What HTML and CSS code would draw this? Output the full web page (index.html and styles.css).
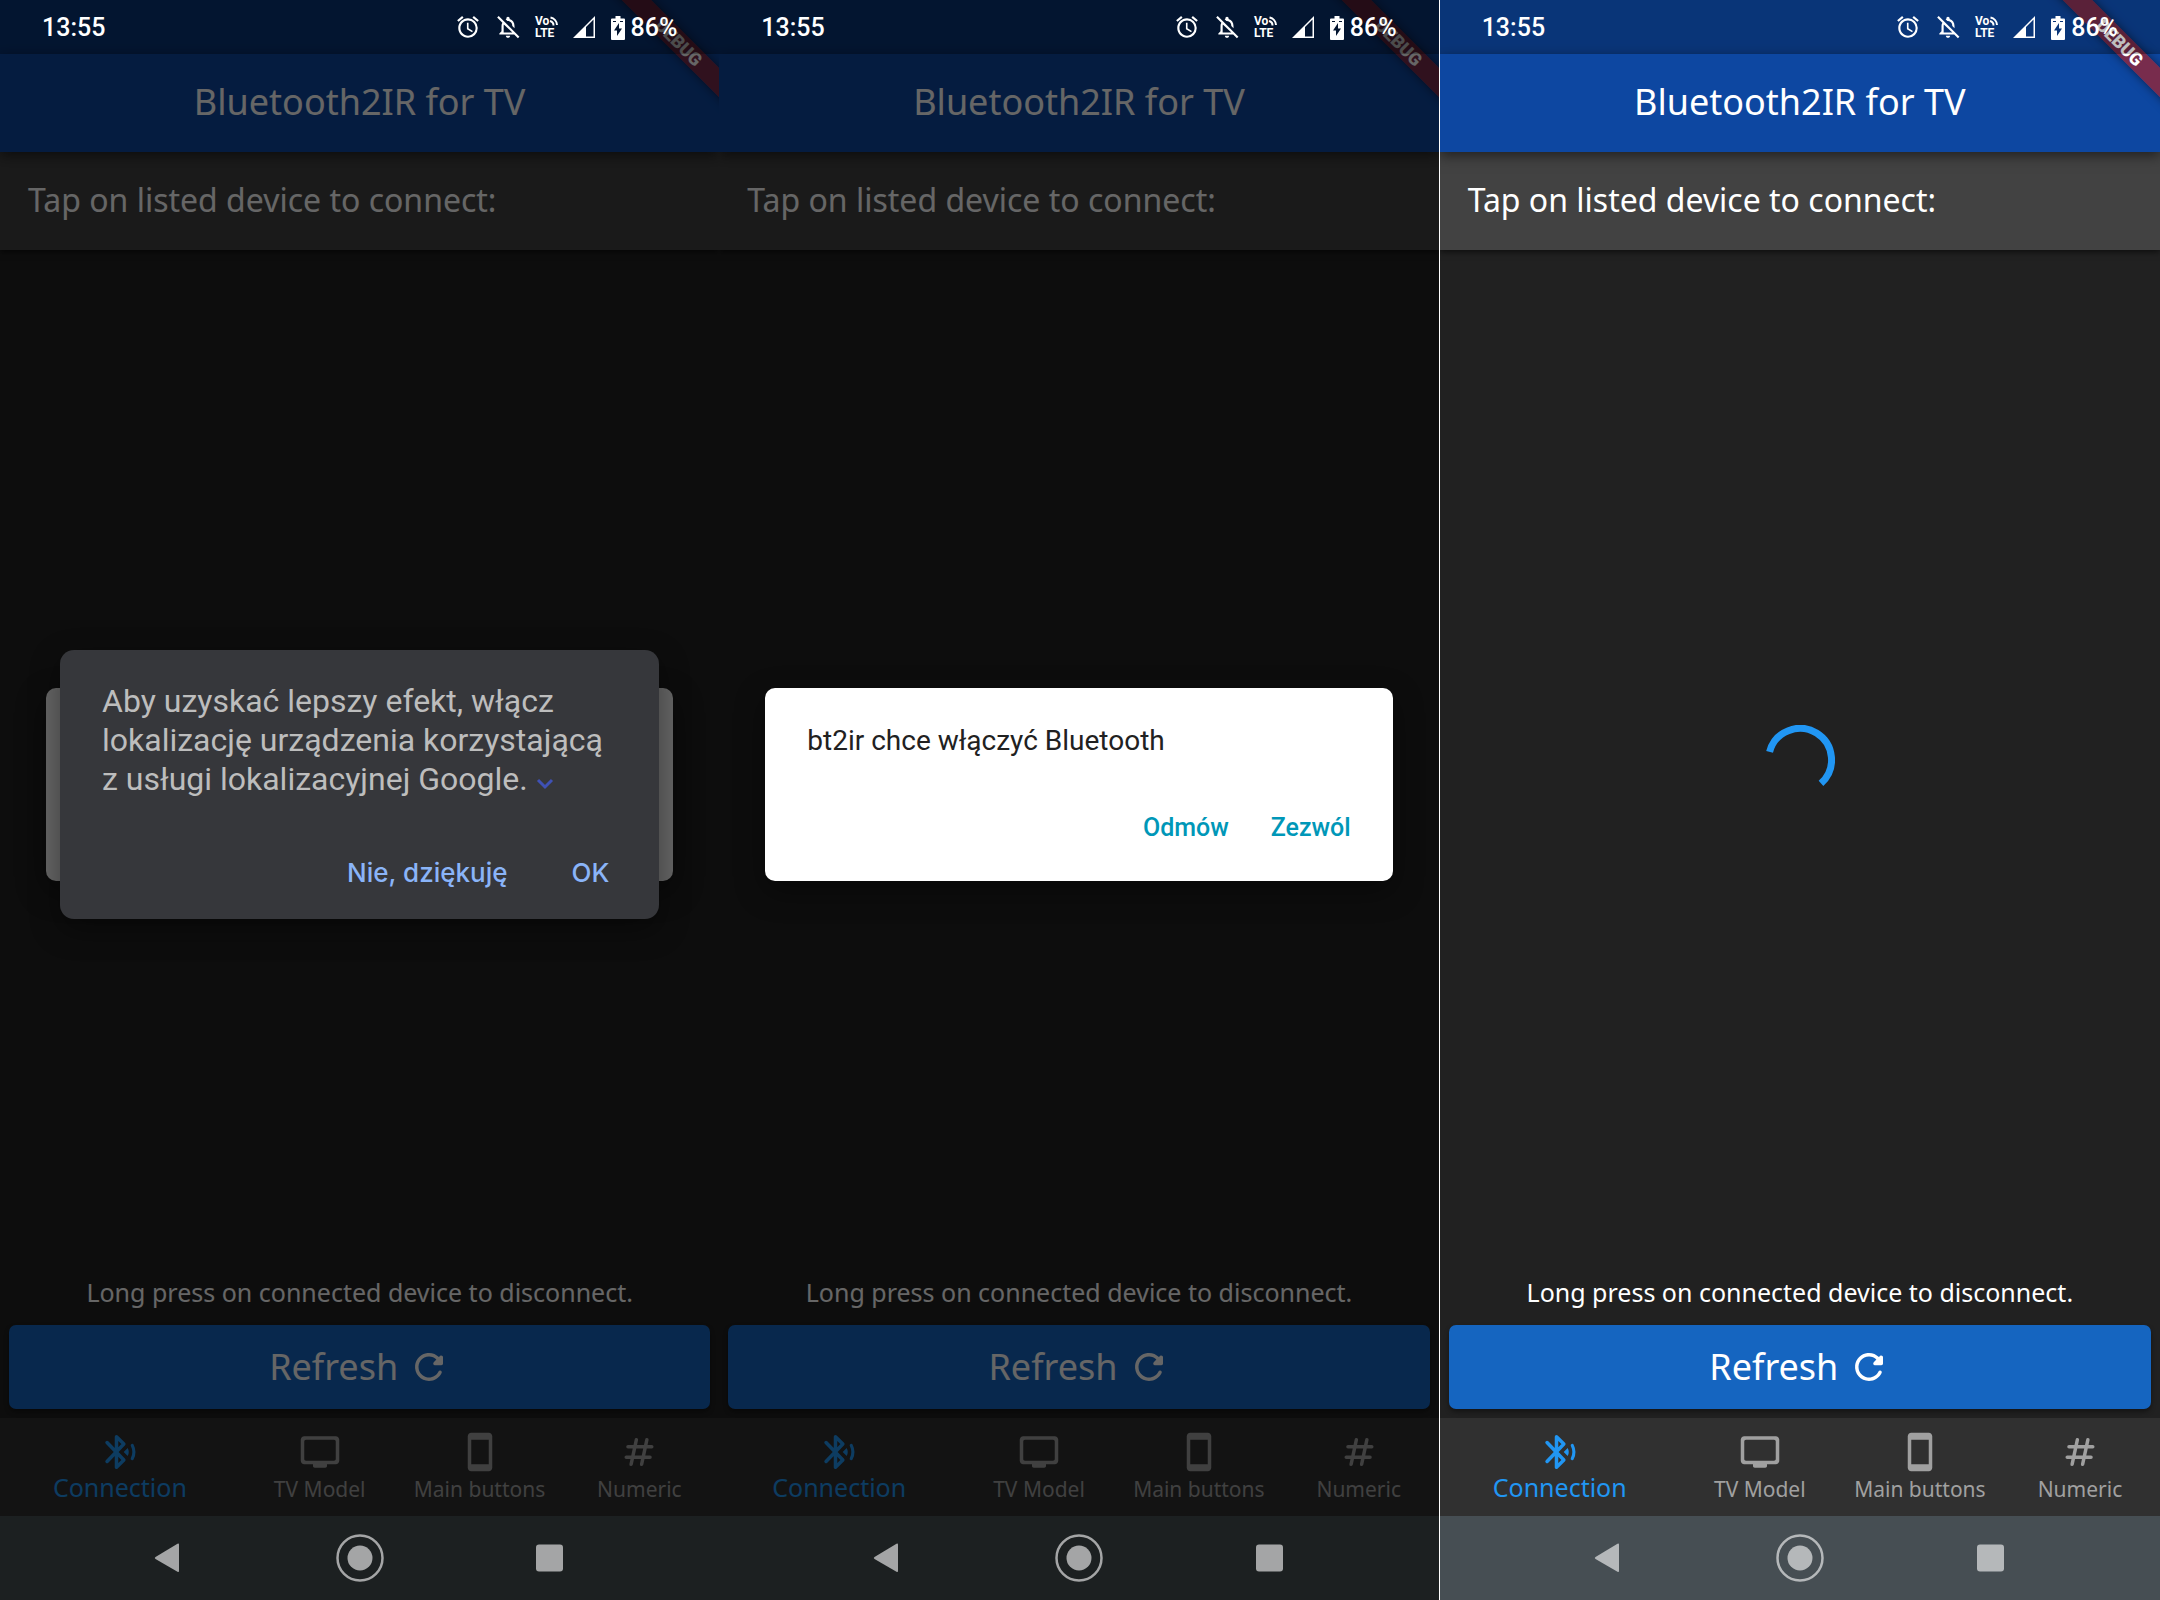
FILE: index.html
```html
<!DOCTYPE html>
<html lang="en">
<head>
<meta charset="utf-8">
<title>Bluetooth2IR for TV</title>
<link rel="stylesheet" href="styles.css">
</head>
<body>
<svg class="sprite" aria-hidden="true">
  <symbol id="alarm" viewBox="0 0 24 24"><path d="M22 5.720l-4.600-3.860-1.290 1.530 4.600 3.860L22 5.720zM7.880 3.390L6.600 1.860 2 5.710l1.290 1.530 4.590-3.850zM12.500 8H11v6l4.750 2.850.75-1.230-4-2.370V8zM12 4c-4.970 0-9 4.030-9 9s4.020 9 9 9a9 9 0 0 0 0-18zm0 16c-3.870 0-7-3.130-7-7s3.130-7 7-7 7 3.130 7 7-3.130 7-7 7z"/></symbol>
  <symbol id="bell-off" viewBox="0 0 24 24"><path d="M12 22c1.100 0 2-.9 2-2h-4c0 1.100.9 2 2 2zm0-15.500c2.490 0 4 2.020 4 4.500v.1l2 2V11c0-3.070-1.630-5.640-4.500-6.320V4c0-.83-.67-1.500-1.500-1.500s-1.500.67-1.500 1.500v.68c-.24.06-.47.15-.69.23l1.640 1.640c.18-.02.36-.05.55-.05zM3.410 1.860L2 3.270l4.810 4.810C6.290 8.950 6 9.950 6 11v5l-2 2v1h13.730l3.410 3.410 1.410-1.410L3.410 1.860zM16 17H8v-6c0-.49.06-.96.19-1.400L16 17z"/></symbol>
  <symbol id="signal" viewBox="0 0 24 24"><path fill-rule="evenodd" d="M0 23L22 1v22zM13 13v8.500h7.500V4.600L13 12.100z"/></symbol>
  <symbol id="battery" viewBox="0 0 14 24"><path fill-rule="evenodd" d="M4.500 0h5v2.500H13a1 1 0 0 1 1 1V23a1 1 0 0 1-1 1H1a1 1 0 0 1-1-1V3.500a1 1 0 0 1 1-1h3.500zM8 7l-5 7.500h3V20l5-7.500H8zM2 5v1h3V5zm7 0v1h3V5z"/></symbol>
  <symbol id="refresh" viewBox="0 0 24 24"><path d="M17.650 6.350c-1.630-1.630-3.940-2.570-6.480-2.310-3.670.37-6.690 3.350-7.100 7.020C3.520 15.910 7.270 20 12 20c3.190 0 5.930-1.870 7.210-4.560.32-.67-.16-1.440-.9-1.440-.37 0-.72.2-.88.53-1.130 2.430-3.840 3.970-6.800 3.310-2.220-.49-4.010-2.300-4.480-4.520C5.310 9.440 8.260 6 12 6c1.660 0 3.140.69 4.220 1.780l-1.510 1.510c-.63.63-.19 1.710.7 1.710H19c.55 0 1-.45 1-1V6.410c0-.89-1.080-1.340-1.710-.71l-.64.65z"/></symbol>
  <symbol id="bluetooth" viewBox="0 0 24 24"><path d="M4.600 6.600L14.200 16.600 10 20.700V3.300L14.200 7.400 4.600 17.400" fill="none" stroke="currentColor" stroke-width="2" stroke-linecap="round" stroke-linejoin="round"/><path d="M14.100 12l2.300-2.300c.8 1.500.8 3.100 0 4.600z"/><path d="M19 8.200q1.900 3.800 0 7.600" fill="none" stroke="currentColor" stroke-width="1.800" stroke-linecap="round"/></symbol>
  <symbol id="tv" viewBox="0 0 24 24"><path d="M21 3H3c-1.100 0-2 .9-2 2v12c0 1.100.9 2 2 2h5v1c0 .55.45 1 1 1h6c.55 0 1-.45 1-1v-1h5c1.100 0 2-.9 2-2V5c0-1.100-.9-2-2-2zm-1 14H4c-.55 0-1-.45-1-1V6c0-.55.45-1 1-1h16c.55 0 1 .45 1 1v10c0 .55-.45 1-1 1z"/></symbol>
  <symbol id="phone" viewBox="0 0 24 24"><path d="M17 1H7c-1.100 0-2 .9-2 2v18c0 1.100.9 2 2 2h10c1.100 0 2-.9 2-2V3c0-1.100-.9-2-2-2zm0 18H7V5h10v14z"/></symbol>
  <symbol id="hash" viewBox="0 0 24 24"><path d="M10.500 5L7.500 19M16.500 5L13.500 19M5.700 9h13.600M4.700 15h13.600" fill="none" stroke="currentColor" stroke-width="2" stroke-linecap="round"/></symbol>
  <symbol id="back" viewBox="0 0 48 48"><path d="M35 10.500v26.500q0 1.500-1.500.8L11.500 25q-1.500-1 0-2L33.500 9.700q1.500-.7 1.500.8z"/></symbol>
  <symbol id="home" viewBox="0 0 48 48"><circle cx="24" cy="24" r="12.500"/><circle cx="24" cy="24" r="22.500" fill="none" stroke="currentColor" stroke-width="2.500"/></symbol>
  <symbol id="recent" viewBox="0 0 48 48"><rect x="9" y="10.500" width="27" height="27" rx="3"/></symbol>
</svg>

<div class="screens">
  <section class="phone dimmed">
    <div class="status">
      <span class="clock">13:55</span>
      <svg class="s-icon"><use href="#alarm"/></svg>
      <svg class="s-icon"><use href="#bell-off"/></svg>
      <svg class="s-icon mid" viewBox="0 0 24 24"><text x="0" y="10">Vo</text><text x="0" y="22">LTE</text><path class="waves" d="M15 6a4.500 4.500 0 0 1 3.500 4.500M15.500 2.500a8 8 0 0 1 6.500 7.500"/></svg>
      <svg class="s-icon mid"><use href="#signal"/></svg>
      <span class="charge"><svg class="s-icon slim"><use href="#battery"/></svg>86%</span>
    </div>
    <header class="app-bar"><h1>Bluetooth2IR for TV</h1></header>
    <span class="debug">DEBUG</span>
    <p class="hint-card">Tap on listed device to connect:</p>
    <main class="devices"></main>
    <p class="hint">Long press on connected device to disconnect.</p>
    <button class="refresh">Refresh<svg><use href="#refresh"/></svg></button>
    <nav class="tabs">
      <button class="tab active"><svg><use href="#bluetooth"/></svg>Connection</button>
      <button class="tab"><svg><use href="#tv"/></svg>TV Model</button>
      <button class="tab"><svg><use href="#phone"/></svg>Main buttons</button>
      <button class="tab"><svg><use href="#hash"/></svg>Numeric</button>
    </nav>
    <div class="system">
      <button aria-label="Back"><svg><use href="#back"/></svg></button>
      <button aria-label="Home"><svg><use href="#home"/></svg></button>
      <button aria-label="Recent"><svg><use href="#recent"/></svg></button>
    </div>
    <div class="scrim">
      <div class="dialog behind"></div>
      <div class="dialog location" role="dialog" lang="pl">
        <p>Aby uzyskać lepszy efekt, włącz lokalizację urządzenia korzystającą z&nbsp;usługi lokalizacyjnej Google. <svg class="chevron" viewBox="0 0 18 12"><path d="M2 2l7 7 7-7" fill="none" stroke="currentColor" stroke-width="3"/></svg></p>
        <div class="actions"><button>Nie, dziękuję</button><button>OK</button></div>
      </div>
    </div>
  </section>

  <section class="phone dimmed">
    <div class="status">
      <span class="clock">13:55</span>
      <svg class="s-icon"><use href="#alarm"/></svg>
      <svg class="s-icon"><use href="#bell-off"/></svg>
      <svg class="s-icon mid" viewBox="0 0 24 24"><text x="0" y="10">Vo</text><text x="0" y="22">LTE</text><path class="waves" d="M15 6a4.500 4.500 0 0 1 3.500 4.500M15.500 2.500a8 8 0 0 1 6.500 7.500"/></svg>
      <svg class="s-icon mid"><use href="#signal"/></svg>
      <span class="charge"><svg class="s-icon slim"><use href="#battery"/></svg>86%</span>
    </div>
    <header class="app-bar"><h1>Bluetooth2IR for TV</h1></header>
    <span class="debug">DEBUG</span>
    <p class="hint-card">Tap on listed device to connect:</p>
    <main class="devices"></main>
    <p class="hint">Long press on connected device to disconnect.</p>
    <button class="refresh">Refresh<svg><use href="#refresh"/></svg></button>
    <nav class="tabs">
      <button class="tab active"><svg><use href="#bluetooth"/></svg>Connection</button>
      <button class="tab"><svg><use href="#tv"/></svg>TV Model</button>
      <button class="tab"><svg><use href="#phone"/></svg>Main buttons</button>
      <button class="tab"><svg><use href="#hash"/></svg>Numeric</button>
    </nav>
    <div class="system">
      <button aria-label="Back"><svg><use href="#back"/></svg></button>
      <button aria-label="Home"><svg><use href="#home"/></svg></button>
      <button aria-label="Recent"><svg><use href="#recent"/></svg></button>
    </div>
    <div class="scrim">
      <div class="dialog permission" role="dialog" lang="pl">
        <p>bt2ir chce włączyć Bluetooth</p>
        <div class="actions"><button>Odmów</button><button>Zezwól</button></div>
      </div>
    </div>
  </section>

  <div class="divider"></div>

  <section class="phone">
    <div class="status">
      <span class="clock">13:55</span>
      <svg class="s-icon"><use href="#alarm"/></svg>
      <svg class="s-icon"><use href="#bell-off"/></svg>
      <svg class="s-icon mid" viewBox="0 0 24 24"><text x="0" y="10">Vo</text><text x="0" y="22">LTE</text><path class="waves" d="M15 6a4.500 4.500 0 0 1 3.500 4.500M15.500 2.500a8 8 0 0 1 6.500 7.500"/></svg>
      <svg class="s-icon mid"><use href="#signal"/></svg>
      <span class="charge"><svg class="s-icon slim"><use href="#battery"/></svg>86%</span>
    </div>
    <header class="app-bar"><h1>Bluetooth2IR for TV</h1></header>
    <span class="debug">DEBUG</span>
    <p class="hint-card">Tap on listed device to connect:</p>
    <main class="devices">
      <svg class="spinner" viewBox="0 0 70 70" role="img" aria-label="Searching"><path d="M4.600 26.800A31.500 31.500 0 1 1 56 58.400" fill="none" stroke="currentColor" stroke-width="7"/></svg>
    </main>
    <p class="hint">Long press on connected device to disconnect.</p>
    <button class="refresh">Refresh<svg><use href="#refresh"/></svg></button>
    <nav class="tabs">
      <button class="tab active"><svg><use href="#bluetooth"/></svg>Connection</button>
      <button class="tab"><svg><use href="#tv"/></svg>TV Model</button>
      <button class="tab"><svg><use href="#phone"/></svg>Main buttons</button>
      <button class="tab"><svg><use href="#hash"/></svg>Numeric</button>
    </nav>
    <div class="system">
      <button aria-label="Back"><svg><use href="#back"/></svg></button>
      <button aria-label="Home"><svg><use href="#home"/></svg></button>
      <button aria-label="Recent"><svg><use href="#recent"/></svg></button>
    </div>
  </section>
</div>
</body>
</html>
```
FILE: styles.css
```css
* { box-sizing: border-box; }

body {
  margin: 0;
  background: #212121;
  color: #fff;
  font-family: "Noto Sans", "Open Sans", sans-serif;
}

h1, p { margin: 0; font-weight: 400; }

button {
  border: 0;
  padding: 0;
  background: none;
  color: inherit;
  font: inherit;
  cursor: pointer;
}

svg { fill: currentColor; display: block; }

.sprite { position: absolute; width: 0; height: 0; }

.screens {
  display: grid;
  grid-template-columns: 719fr 719fr 1px 720fr;
  min-height: 100vh;
}

.divider { background: #fff; }

.phone {
  position: relative;
  display: flex;
  flex-direction: column;
  overflow: hidden;
  background: #212121;
  isolation: isolate;
}

.phone::before {
  content: "";
  position: absolute;
  inset: 0 0 auto;
  height: 54px;
  background: #0d47a1;
}

/* Status bar */
.status {
  position: relative;
  z-index: 4;
  display: flex;
  align-items: center;
  gap: 14px;
  height: 54px;
  padding: 0 42px;
  background: rgba(0, 0, 0, .25);
  font: 500 25px/30px Roboto, sans-serif;
}

.clock { margin-right: auto; padding-top: 2px; }
.charge { display: flex; align-items: center; gap: 6px; padding-top: 2px; }
.s-icon { width: 26px; height: 26px; overflow: visible; }
.s-icon.mid { width: 24px; height: 24px; }
.s-icon.slim { width: 14px; height: 24px; }
.s-icon text { font: 700 12px Roboto, sans-serif; }
.waves { fill: none; stroke: currentColor; stroke-width: 2; }

/* App content */
.app-bar {
  position: relative;
  z-index: 1;
  display: flex;
  align-items: center;
  justify-content: center;
  height: 98px;
  padding-bottom: 2px;
  background: #0d47a1;
  box-shadow: 0 4px 12px rgba(0, 0, 0, .5);
}

h1 { font-size: 36px; line-height: 48px; }

.debug {
  position: absolute;
  z-index: 2;
  top: 32px;
  right: -60px;
  width: 200px;
  height: 21px;
  background: rgba(183, 28, 28, .63);
  box-shadow: 0 0 10px rgba(0, 0, 0, .5);
  font: 900 18px/21px Roboto, sans-serif;
  text-align: center;
  transform: rotate(45deg);
}

.hint-card {
  height: 98px;
  padding: 0 28px;
  background: #424242;
  box-shadow: 0 2px 6px rgba(0, 0, 0, .6);
  font-size: 32px;
  line-height: 96px;
}

.devices {
  flex: 1;
  display: grid;
  place-items: center;
}

.spinner { width: 70px; height: 70px; color: #2196f3; }

.hint {
  padding-bottom: 11px;
  font-size: 25px;
  line-height: 44px;
  text-align: center;
}

.refresh {
  display: flex;
  align-items: center;
  justify-content: center;
  gap: 10px;
  height: 84px;
  margin: 0 9px 9px;
  border-radius: 7px;
  background: #1565c0;
  box-shadow: 0 3px 5px rgba(0, 0, 0, .4);
  font-size: 36px;
  line-height: 48px;
}

.refresh svg { width: 42px; height: 42px; }

.tabs {
  display: grid;
  grid-template-columns: 3fr 2fr 2fr 2fr;
  height: 98px;
  background: #303030;
  color: #a0a0a0;
}

.tab {
  display: flex;
  flex-direction: column;
  align-items: center;
  padding-top: 13px;
  font-size: 21px;
  line-height: 32px;
  white-space: nowrap;
}

.tab svg { width: 42px; height: 42px; }
.tab.active { color: #2196f3; font-size: 25px; line-height: 28px; }

/* System navigation */
.system {
  position: relative;
  z-index: 4;
  display: grid;
  grid-template-columns: repeat(3, 1fr);
  height: 84px;
  padding: 0 72px;
  background: #464e53;
  color: rgba(255, 255, 255, .6);
}

.dimmed .system { background: #1c2021; }

.system button { display: grid; place-items: center; }
.system svg { width: 48px; height: 48px; }

/* Dialogs */
.scrim {
  position: absolute;
  z-index: 3;
  inset: 0;
  display: grid;
  place-items: center;
  padding: 54px 46px 86px;
  background: rgba(0, 0, 0, .6);
  font-family: Roboto, sans-serif;
}

.dialog {
  grid-area: 1 / 1;
  display: flex;
  flex-direction: column;
  justify-content: space-between;
  width: 100%;
  height: 193px;
  border-radius: 10px;
  box-shadow: 0 10px 30px rgba(0, 0, 0, .4);
}

.behind { background: #666; }

.location {
  width: calc(100% - 28px);
  height: 269px;
  padding: 32px 42px 28px;
  border-radius: 14px;
  background: #36373b;
  color: #bdbdbd;
  font-size: 32px;
  line-height: 39px;
}

.chevron {
  display: inline-block;
  width: 18px;
  height: 12px;
  color: #3f51b5;
}

.actions { display: flex; justify-content: flex-end; }

.location .actions {
  gap: 64px;
  padding-right: 8px;
  color: #8ab4f8;
  font: 500 26px/36px Inter, sans-serif;
}

.permission {
  padding: 33px 42px 31px;
  background: #fff;
  color: #212121;
  font-size: 28px;
  line-height: 40px;
}

.permission .actions {
  gap: 42px;
  color: #0097b8;
  font-size: 25px;
  font-weight: 500;
  line-height: 44px;
}
```
